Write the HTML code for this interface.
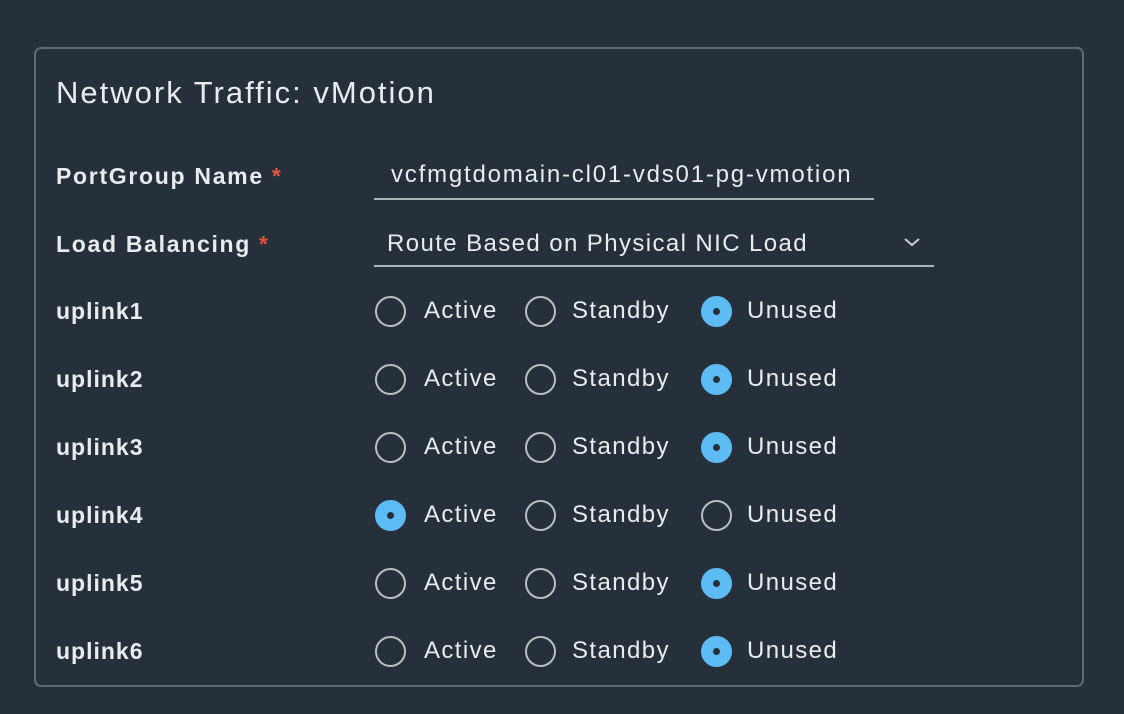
<!DOCTYPE html>
<html><head><style>
body{margin:0;width:1124px;height:714px;background:#25303a;font-family:"Liberation Sans",sans-serif;color:#e8ecef;position:relative;overflow:hidden}
.box{position:absolute;left:34px;top:47px;width:1046px;height:636px;border:2px solid #5f6a73;border-radius:7px}
.t{position:absolute;white-space:nowrap}
.title{left:56px;top:75px;font-size:31px;letter-spacing:2px}
.lbl{left:56px;font-size:23px;font-weight:bold;line-height:30px;letter-spacing:1.7px}
.up{letter-spacing:1px}
.req{color:#e0563f;margin-left:8px}
.r{position:absolute;width:31px;height:31px;border:2px solid #b8c0c6;border-radius:50%;box-sizing:border-box}
.r.on{background:#5ebcf5;border-color:#5ebcf5}
.r.on::after{content:"";position:absolute;left:10.5px;top:10.5px;width:7px;height:7px;border-radius:50%;background:#25303a}
.rl{font-size:24px;line-height:30px;letter-spacing:1.4px}
.line{position:absolute;height:2px;background:#aab3b9}
</style></head><body>
<div class="box"></div>
<div class="t title">Network Traffic: vMotion</div>
<div class="t lbl" style="top:161px">PortGroup Name<span class="req">*</span></div>
<div class="t lbl" style="top:229px">Load Balancing<span class="req">*</span></div>
<div class="t rl" style="left:391px;top:160px;letter-spacing:1.8px">vcfmgtdomain-cl01-vds01-pg-vmotion</div>
<div class="line" style="left:374px;top:198px;width:500px"></div>
<div class="t rl" style="left:387px;top:229px;letter-spacing:1.4px">Route Based on Physical NIC Load</div>
<svg style="position:absolute;left:903px;top:236px" width="18" height="12"><path d="M2 3 L9 9 L16 3" stroke="#c9d0d5" stroke-width="2" fill="none"/></svg>
<div class="line" style="left:374px;top:265px;width:560px"></div>
<div id="rows"></div>
<script>
var sel=[2,2,2,0,2,2],h='';
for(var i=0;i<6;i++){var y=311+68*i;
h+='<div class="t lbl up" style="top:'+(y-15)+'px">uplink'+(i+1)+'</div>';
[[390,424,'Active'],[540,572,'Standby'],[716,747,'Unused']].forEach(function(o,j){
h+='<div class="r'+(sel[i]==j?' on':'')+'" style="left:'+(o[0]-15.5)+'px;top:'+(y-15.5)+'px"></div>';
h+='<div class="t rl" style="left:'+o[1]+'px;top:'+(y-15)+'px">'+o[2]+'</div>';});}
document.getElementById('rows').innerHTML=h;
</script>
</body></html>
